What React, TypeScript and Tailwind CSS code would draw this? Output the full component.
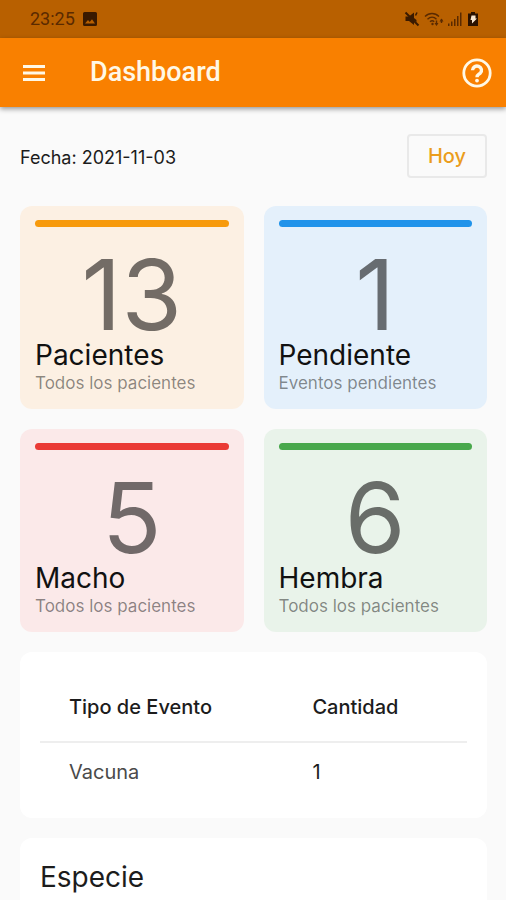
interface Stat {
  value: number
  title: string
  subtitle: string
  cardClass: string
  barClass: string
  valueClass: string
}

interface EventRow {
  type: string
  count: number
}

const stats: Stat[] = [
  {
    value: 13,
    title: 'Pacientes',
    subtitle: 'Todos los pacientes',
    cardClass: 'bg-[#fcf0e3]',
    barClass: 'bg-[#f79a0c]',
    valueClass: 'text-[#736c66]',
  },
  {
    value: 1,
    title: 'Pendiente',
    subtitle: 'Eventos pendientes',
    cardClass: 'bg-[#e4f0fb]',
    barClass: 'bg-[#2093ea]',
    valueClass: 'text-[#676c71]',
  },
  {
    value: 5,
    title: 'Macho',
    subtitle: 'Todos los pacientes',
    cardClass: 'bg-[#fbe9e9]',
    barClass: 'bg-[#ea3a35]',
    valueClass: 'text-[#716969]',
  },
  {
    value: 6,
    title: 'Hembra',
    subtitle: 'Todos los pacientes',
    cardClass: 'bg-[#e9f3ea]',
    barClass: 'bg-[#48a84c]',
    valueClass: 'text-[#696d69]',
  },
]

const events: EventRow[] = [{ type: 'Vacuna', count: 1 }]

function StatusBar() {
  return (
    <div className="flex h-[38px] items-center justify-between bg-[#b86000] pr-[26px] pl-[30px] text-[#5a2a00]">
      <div className="flex items-center gap-2">
        <span className="text-lg">23:25</span>
        <svg className="h-[14px] w-[14px] text-[#3a1a00]" viewBox="0 0 14 14" fill="currentColor">
          <path
            fillRule="evenodd"
            d="M1.5 0h11A1.5 1.5 0 0 1 14 1.5v11a1.5 1.5 0 0 1-1.5 1.5h-11A1.5 1.5 0 0 1 0 12.5v-11A1.5 1.5 0 0 1 1.5 0zM2 11.5h10L9 7.2 6.7 10 5 8z"
          />
        </svg>
      </div>
      <div className="flex items-center gap-1">
        {/* Muted */}
        <svg className="h-4 w-4 text-[#3a1a00]" viewBox="0 0 16 16" fill="currentColor">
          <path d="M1.5 5.5H5L10 1.500v5.500l2.500 2v2L10 9.500V14L5 10H1.500z" />
          <path d="M1.5 1.5l13 13" stroke="currentColor" strokeWidth="2" />
          <path d="M11.500 4.500l1.500-3" stroke="currentColor" strokeWidth="1.500" />
        </svg>
        {/* Wifi */}
        <svg className="h-4 w-5" viewBox="0 0 20 16" fill="none" stroke="currentColor" strokeWidth="1.4">
          <path d="M1 5.500c4-4 10-4 14 0M3.500 8.200c2.800-2.600 6.400-2.600 9 0M6 10.800c1.400-1.200 3-1.200 4.200 0" />
          <circle cx="8.500" cy="13" r="1.200" fill="currentColor" stroke="none" />
          <path d="M12.500 9.500v4M17.500 8v4" />
          <path d="M10.500 12h4l-2 3zM15.500 10.500l2-3 2 3z" fill="currentColor" stroke="none" />
        </svg>
        {/* Signal */}
        <svg className="h-4 w-[14px]" viewBox="0 0 14 16" fill="currentColor">
          <path d="M0 12.5h1.5V15H0zM3 10.500h1.500V15H3zM6 8h1.500v7H6zM9 5h1.500v10H9zM12 1.500h1.500V15H12z" />
        </svg>
        {/* Battery */}
        <svg className="h-4 w-[14px]" viewBox="0 0 14 16">
          <path d="M5 1h4v1.500h3V15H2V2.500h3z" fill="#2b1200" />
          <path d="M5.500 4.500h4v3H11L6 12.500V9H4.500z" fill="#f7e6cf" />
        </svg>
      </div>
    </div>
  )
}

function AppBar() {
  return (
    <header className="flex h-[69px] items-center bg-[#f98000] px-[14px] text-[#fff8e6] shadow-[0_2px_5px_rgba(0,0,0,0.4)]">
      <button type="button" aria-label="Menú" className="flex h-10 w-10 items-center justify-center">
        <svg className="h-4 w-[22px]" viewBox="0 0 22 16" fill="currentColor">
          <path d="M0 0h22v3H0zM0 6.500h22v3H0zM0 13h22v3H0z" />
        </svg>
      </button>
      <h1 className="flex-1 pl-9 text-[27px] font-medium">Dashboard</h1>
      <button type="button" aria-label="Ayuda" className="flex h-[30px] w-[30px] items-center justify-center">
        <svg className="h-[30px] w-[30px]" viewBox="0 0 30 30" fill="none" stroke="currentColor">
          <circle cx="15" cy="15" r="13.2" strokeWidth="2.8" />
          <path d="M10.500 12.200a4.500 4.200 0 1 1 7.700 3c-1.600 1.300-3.200 1.800-3.200 4" strokeWidth="3.400" />
          <circle cx="15" cy="22.600" r="1.900" fill="currentColor" stroke="none" />
        </svg>
      </button>
    </header>
  )
}

function StatCard({ stat }: { stat: Stat }) {
  return (
    <div className={`rounded-xl px-[15px] py-[14px] ${stat.cardClass}`}>
      <div className={`h-[7px] rounded-full ${stat.barClass}`} />
      <p className={`mt-6 text-center text-[98px] leading-[88px] ${stat.valueClass}`}>{stat.value}</p>
      <h2 className="text-[28px] leading-8 text-[#111111]">{stat.title}</h2>
      <p className="text-[17px] leading-6 whitespace-nowrap text-black/45">{stat.subtitle}</p>
    </div>
  )
}

export default function App() {
  return (
    <div className="flex min-h-screen flex-col bg-[#fafafa] font-['Roboto',sans-serif]">
      <StatusBar />
      <AppBar />

      <main className="flex flex-1 flex-col pt-[27px] pr-[19px] pl-5 font-['Inter',sans-serif] text-[#1c1c1c]">
        {/* Date */}
        <div className="mb-7 flex items-center justify-between">
          <p className="pt-1 text-lg">Fecha: 2021-11-03</p>
          <button
            type="button"
            className="h-[44px] rounded border-2 border-[#e9e9e9] px-[19px] text-xl font-medium text-[#eb9d1c]"
          >
            Hoy
          </button>
        </div>

        {/* Stats */}
        <div className="grid grid-cols-2 gap-5">
          {stats.map((stat) => (
            <StatCard key={stat.title} stat={stat} />
          ))}
        </div>

        {/* Events */}
        <section className="mt-5 rounded-xl bg-white px-5 pt-5 pb-[18px]">
          <table className="w-full table-fixed text-left">
            <thead>
              <tr className="h-[70px] border-b-2 border-[#eeeeee] text-xl">
                <th className="w-[57%] pl-[29px] font-medium">Tipo de Evento</th>
                <th className="pl-[29px] font-medium">Cantidad</th>
              </tr>
            </thead>
            <tbody>
              {events.map((event) => (
                <tr key={event.type} className="h-[58px] text-xl">
                  <td className="pl-[29px] text-[#4a4a4a]">{event.type}</td>
                  <td className="pl-[29px]">{event.count}</td>
                </tr>
              ))}
            </tbody>
          </table>
        </section>

        {/* Species */}
        <section className="mt-5 flex-1 rounded-t-xl bg-white px-5 pt-5">
          <h2 className="text-[28px] leading-[38px] text-[#1c1c1c]">Especie</h2>
        </section>
      </main>
    </div>
  )
}
